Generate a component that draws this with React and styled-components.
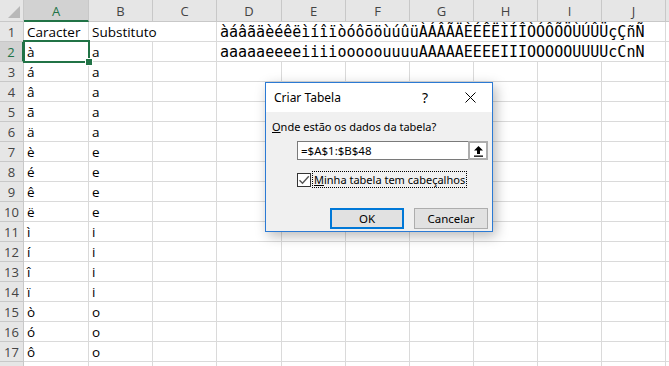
import React from "react";
import styled, { createGlobalStyle } from "styled-components";

const GlobalStyle = createGlobalStyle`
  html, body {
    margin: 0;
    padding: 0;
    background: #fff;
    overflow: hidden;
  }
  * { box-sizing: border-box; }
`;

const COLS = ["A", "B", "C", "D", "E", "F", "G", "H", "I", "J", ""];
const WIDTHS = [24, 65, 64, 64, 65, 64, 64, 64, 64, 64, 64, 64];

const LONG_1 = "àáâãäèéêëìíîïòóôõöùúûüÀÁÂÃÄÈÉÊËÌÍÎÒÓÔÕÖÙÚÛÜçÇñÑ";
const LONG_2 = "aaaaaeeeeiiiiooooouuuuAAAAAEEEEIIIOOOOOUUUUcCnN";

const PAIRS = [
  ["à", "a"], ["á", "a"], ["â", "a"], ["ã", "a"], ["ä", "a"],
  ["è", "e"], ["é", "e"], ["ê", "e"], ["ë", "e"],
  ["ì", "i"], ["í", "i"], ["î", "i"], ["ï", "i"],
  ["ò", "o"], ["ó", "o"], ["ô", "o"],
];

const Sheet = styled.div`
  position: relative;
  width: 669px;
  height: 366px;
  overflow: hidden;
  font-family: "Open Sans", "Liberation Sans", sans-serif;
`;

const Grid = styled.div`
  display: grid;
  grid-template-columns: ${WIDTHS.map((w) => w + "px").join(" ")};
  grid-template-rows: 22px repeat(18, 20px);
`;

const Corner = styled.div`
  background: #e6e6e6;
  border-right: 1px solid #c8c8c8;
  border-bottom: 1px solid #c8c8c8;
  position: relative;
  &::after {
    content: "";
    position: absolute;
    right: 3px;
    bottom: 3px;
    border-style: solid;
    border-width: 0 0 12px 12px;
    border-color: transparent transparent #b8b8b8 transparent;
  }
`;

const ColHead = styled.div`
  display: flex;
  align-items: center;
  justify-content: center;
  font-size: 13px;
  background: ${(p) => (p.$active ? "#d2d2d2" : "#e6e6e6")};
  color: ${(p) => (p.$active ? "#217346" : "#444")};
  border-right: 1px solid #c8c8c8;
  border-bottom: ${(p) => (p.$active ? "2px solid #217346" : "1px solid #c8c8c8")};
  padding-top: ${(p) => (p.$active ? "1px" : "0")};
`;

const RowHead = styled.div`
  display: flex;
  align-items: flex-end;
  justify-content: center;
  line-height: 18px;
  font-size: 13px;
  background: ${(p) => (p.$active ? "#d2d2d2" : "#e6e6e6")};
  color: ${(p) => (p.$active ? "#217346" : "#444")};
  border-right: ${(p) => (p.$active ? "2px solid #217346" : "1px solid #c8c8c8")};
  border-bottom: 1px solid #c8c8c8;
`;

const Cell = styled.div`
  grid-column: span ${(p) => p.$span || 1};
  display: flex;
  align-items: flex-end;
  padding: 0 0 0 3px;
  line-height: 18px;
  font-size: 13.5px;
  color: #000;
  white-space: nowrap;
  overflow: visible;
  border-right: 1px solid #dadada;
  border-bottom: 1px solid #dadada;
`;

const Wide = styled(Cell)`
  font-family: "DejaVu Sans Mono", monospace;
  font-size: 15px;
  padding-left: 3px;
`;

const Selection = styled.div`
  position: absolute;
  left: 23px;
  top: 40px;
  width: 67px;
  height: 23px;
  border: 2px solid #217346;
  pointer-events: none;
  &::after {
    content: "";
    position: absolute;
    right: -5px;
    bottom: -5px;
    width: 6px;
    height: 6px;
    background: #217346;
    border: 1px solid #fff;
  }
`;

const Dialog = styled.div`
  position: absolute;
  left: 265px;
  top: 82px;
  width: 228px;
  height: 150px;
  background: #f0f0f0;
  border: 1px solid #2b7ad4;
  box-shadow: 3px 4px 12px rgba(0, 0, 0, 0.28);
  display: flex;
  flex-direction: column;
  font-family: "Noto Sans", "Open Sans", sans-serif;
  font-size: 11px;
  color: #000;
`;

const TitleBar = styled.div`
  height: 29px;
  background: #fff;
  display: flex;
  align-items: center;
  padding: 0 0 0 8px;
  font-size: 12px;
`;

const Title = styled.div`
  flex: 1;
`;

const TitleButton = styled.div`
  width: ${(p) => p.$w}px;
  display: flex;
  justify-content: center;
  align-items: center;
  font-size: 14px;
`;

const Body = styled.div`
  flex: 1;
  display: flex;
  flex-direction: column;
  padding: 6px 4px 0 6px;
`;

const Label = styled.div`
  height: 17px;
  line-height: 17px;
  u { text-decoration: underline; }
`;

const InputRow = styled.div`
  display: flex;
  margin: 6px 0 0 25px;
  height: 19px;
`;

const Input = styled.div`
  width: 171px;
  height: 19px;
  background: #fff;
  border: 1px solid #7a7a7a;
  border-right: none;
  display: flex;
  align-items: center;
  padding-left: 3px;
  font-size: 11.5px;
`;

const PickButton = styled.div`
  width: 20px;
  height: 19px;
  background: #fff;
  border: 2px solid #adadad;
  display: flex;
  align-items: center;
  justify-content: center;
`;

const CheckRow = styled.div`
  display: flex;
  align-items: center;
  margin: 11px 0 0 25px;
  height: 17px;
`;

const Box = styled.div`
  width: 14px;
  height: 14px;
  border: 1px solid #333;
  background: #fff;
  display: flex;
  align-items: center;
  justify-content: center;
`;

const CheckLabel = styled.div`
  margin-left: 1px;
  padding: 0 1px;
  height: 17px;
  line-height: 15px;
  border: 1px dotted #000;
  u { text-decoration: underline; }
`;

const ButtonRow = styled.div`
  display: flex;
  justify-content: flex-end;
  gap: 10px;
  margin-top: 20px;
`;

const Button = styled.div`
  width: 74px;
  height: 21px;
  background: #e1e1e1;
  border: ${(p) => (p.$primary ? "2px solid #0078d7" : "1px solid #adadad")};
  display: flex;
  align-items: center;
  justify-content: center;
  font-size: 11.5px;
`;

function UploadIcon() {
  return (
    <svg width="11" height="12" viewBox="0 0 11 12">
      <path d="M5.5 1 L10 5.5 L7 5.5 L7 9 L4 9 L4 5.5 L1 5.5 Z" fill="#000" />
      <rect x="1" y="10.5" width="9" height="1.3" fill="#000" />
    </svg>
  );
}

function CheckIcon() {
  return (
    <svg width="12" height="12" viewBox="0 0 12 12">
      <path d="M1.5 6.2 L4.5 9.2 L10.8 2.2" stroke="#555" strokeWidth="1.4" fill="none" />
    </svg>
  );
}

function CloseIcon() {
  return (
    <svg width="11" height="11" viewBox="0 0 11 11">
      <path d="M0.5 0.5 L10.5 10.5 M10.5 0.5 L0.5 10.5" stroke="#000" strokeWidth="1" />
    </svg>
  );
}

function EmptyCells({ count }) {
  return Array.from({ length: count }).map((_, i) => <Cell key={i} />);
}

export default function App() {
  return (
    <Sheet>
      <GlobalStyle />
      <Grid>
        <Corner />
        {COLS.map((c, i) => (
          <ColHead key={i} $active={c === "A"}>{c}</ColHead>
        ))}

        <RowHead>1</RowHead>
        <Cell>Caracter</Cell>
        <Cell $span={2}>Substituto</Cell>
        <Wide $span={7}>{LONG_1}</Wide>
        <Cell />

        <RowHead $active>2</RowHead>
        <Cell>{PAIRS[0][0]}</Cell>
        <Cell>{PAIRS[0][1]}</Cell>
        <Cell />
        <Wide $span={7}>{LONG_2}</Wide>
        <Cell />

        {PAIRS.slice(1).map((p, i) => (
          <React.Fragment key={i}>
            <RowHead>{i + 3}</RowHead>
            <Cell>{p[0]}</Cell>
            <Cell>{p[1]}</Cell>
            <EmptyCells count={9} />
          </React.Fragment>
        ))}

        <RowHead />
        <EmptyCells count={11} />
      </Grid>

      <Selection />

      <Dialog>
        <TitleBar>
          <Title>Criar Tabela</Title>
          <TitleButton $w={46}>?</TitleButton>
          <TitleButton $w={44}><CloseIcon /></TitleButton>
        </TitleBar>
        <Body>
          <Label><u>O</u>nde estão os dados da tabela?</Label>
          <InputRow>
            <Input>=$A$1:$B$48</Input>
            <PickButton><UploadIcon /></PickButton>
          </InputRow>
          <CheckRow>
            <Box><CheckIcon /></Box>
            <CheckLabel><u>M</u>inha tabela tem cabeçalhos</CheckLabel>
          </CheckRow>
          <ButtonRow>
            <Button $primary>OK</Button>
            <Button>Cancelar</Button>
          </ButtonRow>
        </Body>
      </Dialog>
    </Sheet>
  );
}
